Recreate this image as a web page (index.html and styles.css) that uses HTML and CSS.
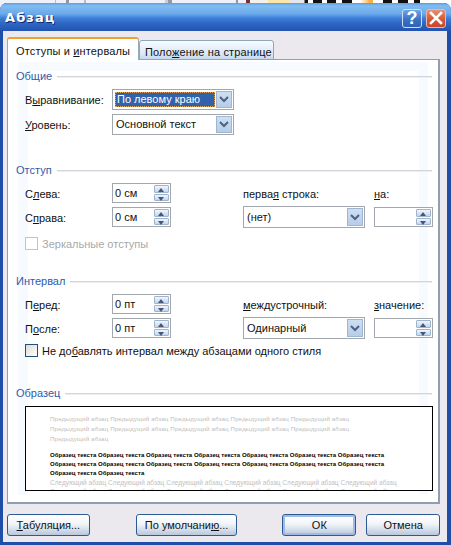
FILE: index.html
```html
<!DOCTYPE html>
<html lang="ru">
<head>
<meta charset="utf-8">
<title>Абзац</title>
<link rel="stylesheet" href="styles.css">
</head>
<body>
<div class="backdrop"></div>
<div class="window">
  <div class="titlebar">
    <span class="title">Абзац</span>
    <span class="tb-btn help">?</span>
    <span class="tb-btn close"><svg width="14" height="14" viewBox="0 0 14 14"><path d="M2 2 L12 12 M12 2 L2 12" stroke="#fff" stroke-width="2.6" stroke-linecap="square" fill="none"/></svg></span>
  </div>
  <div class="body">
    <div class="tabs">
      <div class="tab active">Отступы и <u>и</u>нтервалы</div>
      <div class="tab">Поло<u>ж</u>ение на странице</div>
    </div>
    <div class="panel">
      <div class="heading h1"><span>Общие</span></div>
      <div class="general">
        <label class="lbl">В<u>ы</u>равнивание:</label>
        <div class="combo sel"><span class="value selected">По левому краю</span><span class="drop"><svg width="10" height="7" viewBox="0 0 10 7"><path d="M1 1 L5 5 L9 1" stroke="#4d6185" stroke-width="2" fill="none"/></svg></span></div>
        <label class="lbl"><u>У</u>ровень:</label>
        <div class="combo sel"><span class="value">Основной текст</span><span class="drop"><svg width="10" height="7" viewBox="0 0 10 7"><path d="M1 1 L5 5 L9 1" stroke="#4d6185" stroke-width="2" fill="none"/></svg></span></div>
      </div>

      <div class="heading h2"><span>Отступ</span></div>
      <div class="fields">
        <label class="lbl">С<u>л</u>ева:</label>
        <div class="spin"><span class="value">0 см</span><span class="arrows"><i class="up"></i><i class="down"></i></span></div>
        <label class="lbl col4">перва<u>я</u> строка:</label>
        <label class="lbl col6"><u>н</u>а:</label>
        <label class="lbl">С<u>п</u>рава:</label>
        <div class="spin"><span class="value">0 см</span><span class="arrows"><i class="up"></i><i class="down"></i></span></div>
        <div class="combo wide col4"><span class="value">(нет)</span><span class="drop"><svg width="10" height="7" viewBox="0 0 10 7"><path d="M1 1 L5 5 L9 1" stroke="#4d6185" stroke-width="2" fill="none"/></svg></span></div>
        <div class="spin col6"><span class="value"></span><span class="arrows"><i class="up"></i><i class="down"></i></span></div>
      </div>
      <div class="check disabled c1"><span class="box"></span><span>Зеркальные отступы</span></div>

      <div class="heading h3"><span>Интервал</span></div>
      <div class="fields">
        <label class="lbl">П<u>е</u>ред:</label>
        <div class="spin"><span class="value">0 пт</span><span class="arrows"><i class="up"></i><i class="down"></i></span></div>
        <label class="lbl col4"><u>м</u>еждустрочный:</label>
        <label class="lbl col6"><u>з</u>начение:</label>
        <label class="lbl">П<u>о</u>сле:</label>
        <div class="spin"><span class="value">0 пт</span><span class="arrows"><i class="up"></i><i class="down"></i></span></div>
        <div class="combo wide col4"><span class="value">Одинарный</span><span class="drop"><svg width="10" height="7" viewBox="0 0 10 7"><path d="M1 1 L5 5 L9 1" stroke="#4d6185" stroke-width="2" fill="none"/></svg></span></div>
        <div class="spin col6"><span class="value"></span><span class="arrows"><i class="up"></i><i class="down"></i></span></div>
      </div>
      <div class="check c2"><span class="box"></span><span>Не до<u>б</u>авлять интервал между абзацами одного стиля</span></div>

      <div class="heading h4"><span>Образец</span></div>
      <div class="preview">
        <p class="prev">Предыдущий абзац Предыдущий абзац Предыдущий абзац Предыдущий абзац Предыдущий абзац<br>Предыдущий абзац Предыдущий абзац Предыдущий абзац Предыдущий абзац Предыдущий абзац<br>Предыдущий абзац</p>
        <p class="sample">Образец текста Образец текста Образец текста Образец текста Образец текста Образец текста Образец текста<br>Образец текста Образец текста Образец текста Образец текста Образец текста Образец текста Образец текста<br>Образец текста Образец текста</p>
        <p class="next">Следующий абзац Следующий абзац Следующий абзац Следующий абзац Следующий абзац Следующий абзац<br>Следующий абзац Следующий абзац Следующий абзац Следующий абзац Следующий абзац Следующий абзац</p>
      </div>
    </div>
    <div class="buttons">
      <button class="btn b-tab"><u>Т</u>абуляция...</button>
      <button class="btn b-def">По умолчани<u>ю</u>...</button>
      <button class="btn b-ok default">ОК</button>
      <button class="btn b-cancel">Отмена</button>
    </div>
  </div>
</div>
</body>
</html>
```

FILE: styles.css
```css
* { box-sizing: border-box; }
html, body { margin: 0; padding: 0; height: 545px; overflow: hidden; background: #fff; }
body { font-family: "Liberation Sans", Arial, sans-serif; font-size: 11px; color: #111; }

.backdrop {
  height: 8px;
  background: linear-gradient(90deg,
    #eef1f8 0 55px, #b8bdc8 55px 56px, #eef1f8 56px 66px, #8f96a8 66px 69px, #eef1f8 69px 84px, #b8bdc8 84px 86px,
    #eef1f8 86px 165px, #c8cdd8 165px 168px, #8f9ab0 168px 172px, #eef1f8 172px 236px, #8f96a8 236px 238px, #eef1f8 238px 246px,
    #7a3030 246px 250px, #f4f0ec 250px 268px, #fbe6a8 268px 289px, #e4e6ec 289px 304px,
    #111 305px 308px, #fff 308px 313px, #111 313px 322px, #fff 322px 327px, #111 327px 336px, #fff 336px 342px, #111 342px 352px, #fff 352px 360px,
    #ffb040 370px 373px, #fff 373px 383px, #111 383px 392px, #fff 392px 398px, #111 398px 408px, #fff 408px 414px, #111 414px 420px, #fff 420px 451px);
}

.window {
  position: relative;
  margin-top: -5px;
  height: 542px;
  background: #1f4ea8;
  border-radius: 7px 7px 0 0;
  display: flex;
  flex-direction: column;
  padding: 0 4px 3px 3px;
}

.titlebar {
  height: 28px;
  margin: 0 -4px 0 -3px;
  padding: 0 5px 0 5px;
  border-radius: 7px 7px 0 0;
  background: linear-gradient(#5d9de6 0, #82bdf0 3px, #6aa8ea 11px, #3f7fd8 15px, #2f68c4 20px, #2353ae 28px);
  display: flex;
  align-items: center;
}
.title {
  flex: 1;
  font-family: "DejaVu Sans", sans-serif;
  font-weight: bold;
  font-size: 13px;
  letter-spacing: 1.1px;
  color: #fff;
  text-shadow: 1px 1px 0 #0d2a70;
  margin-top: 1px;
}
.tb-btn {
  width: 20px;
  height: 19px;
  border-radius: 3px;
  border: 1px solid #cfe0f4;
  display: flex;
  align-items: center;
  justify-content: center;
  margin-right: 4px;
  margin-top: 2px;
}
.help {
  background: linear-gradient(#6fa6e6, #3a72c6 55%, #2e62b6);
  color: #fff;
  font-weight: bold;
  font-size: 18px;
}
.close {
  background: linear-gradient(#e89078, #d85c36 50%, #c8482a);
  border-color: #e8b8a8;
  margin-right: 0;
}

.body {
  flex: 1;
  background: #ece9ee;
  padding: 7px 7px 0 4px;
  display: flex;
  flex-direction: column;
}

.tabs { display: flex; align-items: flex-end; height: 22px; position: relative; z-index: 1; margin-bottom: -1px; }
.tab {
  height: 20px;
  width: 135px;
  padding: 5px 0 0 5px;
  background: linear-gradient(#f8fbff, #dbe8f6 70%, #c4d8ee);
  border: 1px solid #8fa5bd;
  border-radius: 3px 3px 0 0;
  white-space: nowrap;
  letter-spacing: 0.15px;
}
.tab.active {
  height: 23px;
  width: 132px;
  padding: 6px 0 0 8px;
  background: #fff;
  border: 1px solid #9aa9bb;
  border-top: 2px solid #f0a030;
  border-bottom: none;
}

.panel {
  height: 445px;
  border: 1px solid #8f9fb2;
  border-right-width: 2px;
  border-bottom-width: 2px;
  padding: 9px 6px 0 8px;
  background:
    linear-gradient(#fff, #fff) 20px 11px / 391px 424px no-repeat,
    linear-gradient(#f7fbff, #f7fbff) 10px 2px / 410px 433px no-repeat,
    #fff;
}

.heading { display: flex; align-items: center; gap: 5px; height: 14px; color: #2f5bab; }
.heading::after { content: ""; flex: 1; height: 1px; background: #d2d5dc; box-shadow: 0 1px 0 #eceef2; }
.h2 { margin-top: 28px; }
.h3 { margin-top: 24px; }
.h4 { margin-top: 29px; }

.general {
  display: grid;
  grid-template-columns: 87px 122px;
  grid-auto-rows: 21px;
  row-gap: 4px;
  margin: 6px 0 0 9px;
  align-items: center;
}
.fields {
  display: grid;
  grid-template-columns: 87px 59px 72px 122px 9px 59px;
  grid-auto-rows: 20px;
  row-gap: 4px;
  margin: 6px 0 0 9px;
  align-items: center;
}
.col4 { grid-column: 4; }
.col6 { grid-column: 6; }
.lbl { white-space: nowrap; padding-top: 2px; }
.general .lbl { padding-top: 1px; }

.combo, .spin {
  display: flex;
  align-items: stretch;
  background: #fff;
  border: 1px solid #a2a6ad;
  box-shadow: inset 0 0 0 1px #fff;
}
.combo.sel { height: 21px; }
.combo.wide { height: 22px; }
.value { flex: 1; padding: 2px 0 0 2px; line-height: 15px; white-space: nowrap; overflow: hidden; }
.combo .value { padding-left: 3px; }
.combo.wide .value { padding: 3px 0 0 3px; }
.spin { height: 20px; }
.spin .value { padding: 2px 0 0 2px; }
.selected {
  margin: 2px 0 2px 2px;
  background: #3262ab;
  color: #fff;
  outline: 1px dotted #e0a860;
  outline-offset: -1px;
}
.combo .value.selected { padding: 0 0 0 2px; }
.drop {
  width: 16px;
  margin: 1px;
  background: linear-gradient(#cfdff2, #b6cde8);
  border: 1px solid #9fb6d3;
  display: flex;
  align-items: center;
  justify-content: center;
}
.arrows { width: 15px; margin: 1px 1px 1px 0; display: flex; flex-direction: column; gap: 1px; }
.arrows i {
  flex: 1;
  border: 1px solid #9fb4cd;
  border-radius: 1px;
  background: linear-gradient(#f2f6fc, #c2d5ec);
  position: relative;
}
.arrows i::after {
  content: "";
  position: absolute;
  left: 3px;
  top: 2px;
  border-left: 3px solid transparent;
  border-right: 3px solid transparent;
}
.arrows .up::after { border-bottom: 4px solid #44587c; }
.arrows .down::after { border-top: 4px solid #44587c; }

.check { display: flex; align-items: center; gap: 4px; margin-left: 9px; height: 13px; white-space: nowrap; }
.box { width: 13px; height: 13px; border: 1px solid #1d5180; background: linear-gradient(135deg, #dcdcd4, #fff); }
.c1 { margin-top: 10px; }
.c2 { margin-top: 6px; }
.disabled { color: #a8a8a8; }
.disabled .box { border-color: #c4c4c4; background: #fff; }

.preview {
  margin: 6px 0 0 9px;
  width: 408px;
  height: 85px;
  border: 1px solid #000;
  background: #fff;
  overflow: hidden;
  padding: 7px 0 0 24px;
  font-size: 6.25px;
  white-space: nowrap;
}
.preview p { margin: 0; }
.prev { color: #c2bebc; line-height: 10px; margin-bottom: 7px !important; letter-spacing: 0.09px; }
.sample { color: #000; font-weight: bold; line-height: 9px; font-size: 6px; letter-spacing: 0.03px; }
.next { color: #c4c0be; line-height: 9px; font-size: 6.5px; letter-spacing: 0.03px; }

.buttons { display: flex; margin-top: 10px; height: 22px; }
.btn {
  font: inherit;
  color: #111;
  height: 22px;
  padding: 0;
  border: 1px solid #2c5a94;
  border-radius: 3px;
  background: linear-gradient(#fff 0, #f1f4f9 45%, #b9c8dc 100%);
}
.b-tab { width: 83px; }
.b-def { width: 102px; margin-left: 46px; }
.b-ok { width: 74px; margin-left: 45px; }
.b-cancel { width: 74px; margin-left: 10px; }
.default { box-shadow: inset 0 0 0 2px #9fbbe6; }
```
